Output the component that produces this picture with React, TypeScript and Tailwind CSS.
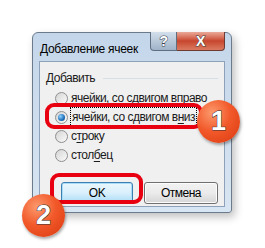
import React from 'react';

const font = { fontFamily: '"Liberation Sans", Arial, sans-serif' };

function Radio({ checked }: { checked?: boolean }) {
  return (
    <span className="w-[13px] h-[13px] rounded-full border border-[#8f8f8f] bg-gradient-to-br from-[#d4d4d4] to-[#fbfbfb] flex items-center justify-center shrink-0">
      {checked && (
        <span className="w-[7px] h-[7px] rounded-full bg-[radial-gradient(circle_at_35%_35%,#8fd3ff,#1f6fb8_60%,#0b3f7a)]" />
      )}
    </span>
  );
}

function U({ children }: { children: React.ReactNode }) {
  return <span className="underline underline-offset-2">{children}</span>;
}

function Badge({ n }: { n: string }) {
  return (
    <div className="w-[43px] h-[43px] rounded-full bg-[radial-gradient(circle_at_35%_30%,#fb9a6e,#f2592a_45%,#d8380f)] shadow-[1px_2px_3px_rgba(0,0,0,0.35)] flex items-center justify-center">
      <span
        className="text-[27px] font-bold text-white leading-none tracking-normal"
        style={{ WebkitTextStroke: '1px #333', paintOrder: 'stroke fill' }}
      >
        {n}
      </span>
    </div>
  );
}

export default function App() {
  return (
    <div className="w-[265px] h-[248px] bg-white relative overflow-hidden whitespace-nowrap tracking-[-0.5px]" style={font}>
      <div className="pl-[32px] pt-[32px]">
        <div className="w-[200px] h-[181px] rounded-t-[6px] rounded-b-[3px] border border-[#6b7b8c] bg-gradient-to-b from-[#c4d6ea] to-[#d8e5f2] shadow-[3px_4px_8px_rgba(0,0,0,0.25)] flex flex-col px-[6px] pb-[5px]">
          <div className="h-[28px] flex items-start">
            <span className="text-[12px] text-black mt-[10px] ml-[1px] leading-none tracking-[-0.3px]">Добавление ячеек</span>
            <div className="ml-auto flex shrink-0 -mt-px">
              <div className="w-[27px] h-[19px] rounded-bl-[4px] border border-[#5f6f80] border-t-0 bg-gradient-to-b from-[#d3dfeb] via-[#b9c9da] to-[#9fb3c8] flex items-center justify-center">
                <span className="text-[14px] font-bold text-white leading-none" style={{ WebkitTextStroke: '1px #3a4450', paintOrder: 'stroke fill' }}>?</span>
              </div>
              <div className="w-[48px] h-[19px] rounded-br-[4px] border border-[#6e3a32] border-t-0 border-l-0 bg-gradient-to-b from-[#e9a898] via-[#c8452d] to-[#d97a60] flex items-center justify-center">
                <span className="text-[14px] font-bold text-white leading-none" style={{ WebkitTextStroke: '1px #444', paintOrder: 'stroke fill' }}>X</span>
              </div>
            </div>
          </div>
          <div className="flex-1 bg-[#f0f0f0] border border-[#8da2b8] flex flex-col text-[12px] text-[#1a1a1a] px-[6px]">
            <div className="flex items-center mt-[9px] h-[14px]">
              <span>Добавить</span>
              <span className="flex-1 ml-[8px] border-t border-[#d5dfe5]" />
            </div>
            <div className="flex flex-col pl-[9px] mt-[6px] gap-[5px]">
              <div className="flex items-center gap-[3px] h-[14px]">
                <Radio />
                <span>ячейки, со сдвигом вправо</span>
              </div>
              <div className="flex items-center gap-[3px] h-[14px]">
                <Radio checked />
                <span className="outline outline-1 outline-dotted outline-black px-px">ячейки, со сдвигом в<U>н</U>из</span>
              </div>
              <div className="flex items-center gap-[3px] h-[14px]">
                <Radio />
                <span>с<U>т</U>року</span>
              </div>
              <div className="flex items-center gap-[3px] h-[14px]">
                <Radio />
                <span>стол<U>б</U>ец</span>
              </div>
            </div>
            <div className="flex mt-[20px] pl-[15px] gap-[11px]">
              <button className="w-[72px] h-[22px] rounded-[3px] border border-[#3c7fb1] bg-gradient-to-b from-[#eaf6fd] via-[#d9f0fc] to-[#a7d9f5] shadow-[inset_0_0_0_1px_#a9dcf6] text-[12px] text-black">OK</button>
              <button className="w-[74px] h-[22px] rounded-[3px] border border-[#707070] bg-gradient-to-b from-[#f2f2f2] via-[#ebebeb] to-[#d5d5d5] shadow-[inset_0_0_0_1px_#fcfcfc] text-[12px] text-black">Отмена</button>
            </div>
          </div>
        </div>
      </div>
      <div className="absolute left-[45px] top-[103px] w-[158px] h-[26px] border-[4px] border-[#e80010] rounded-[9px]" />
      <div className="absolute left-[50px] top-[173px] w-[93px] h-[31px] border-[4px] border-[#e80010] rounded-[9px]" />
      <div className="absolute left-[197px] top-[100px]"><Badge n="1" /></div>
      <div className="absolute left-[22px] top-[194px]"><Badge n="2" /></div>
    </div>
  );
}
